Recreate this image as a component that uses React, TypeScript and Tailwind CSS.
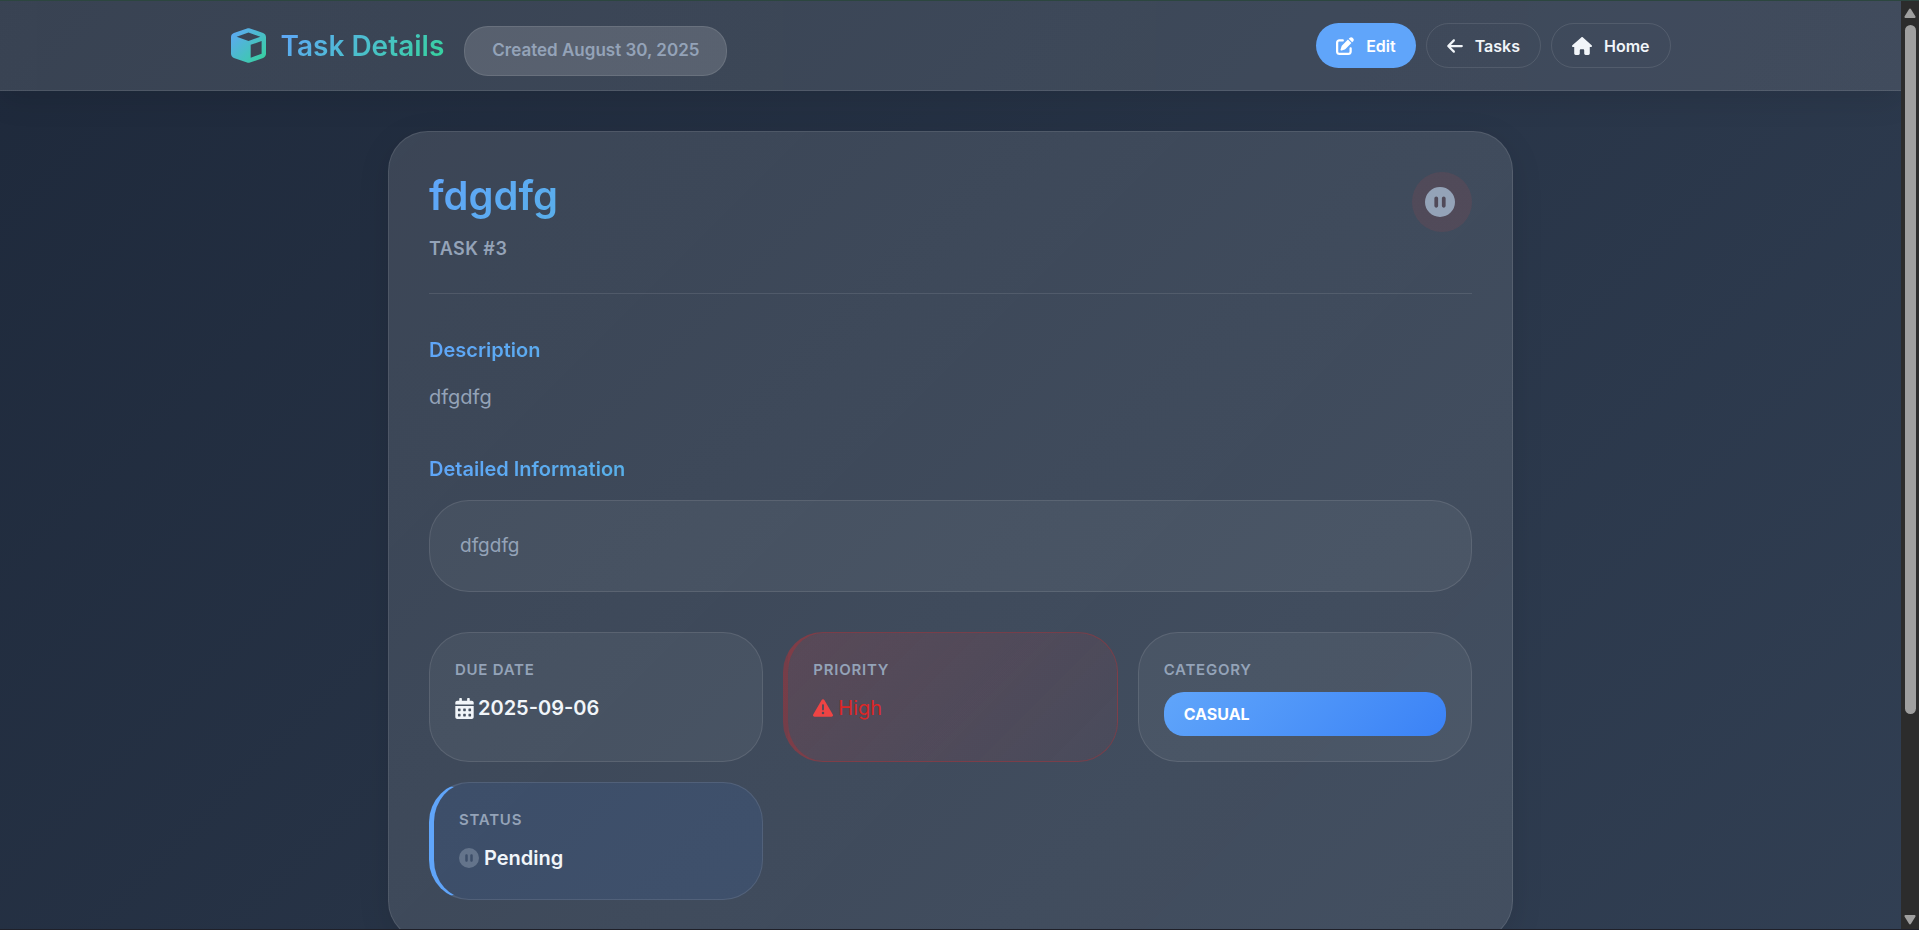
import type { ReactNode } from "react";
import { FaCalendarAlt } from "react-icons/fa";
import {
  FaArrowLeft,
  FaCirclePause,
  FaHouse,
  FaPenToSquare,
  FaTriangleExclamation,
} from "react-icons/fa6";

function CubeLogo() {
  return (
    <svg viewBox="0 0 512 512" className="size-[35px] shrink-0" aria-hidden="true">
      <defs>
        <linearGradient id="cube" x1="0" y1="0" x2="1" y2="1">
          <stop offset="0" stopColor="#60a5fa" />
          <stop offset="1" stopColor="#34d399" />
        </linearGradient>
      </defs>
      <path
        fill="url(#cube)"
        d="M234.5 5.7c13.9-5 29.1-5 43.1 0l192 68.6C495 83.4 512 107.5 512 134.6V377.4c0 27-17 51.2-42.5 60.3l-192 68.6c-13.9 5-29.1 5-43.1 0l-192-68.6C17 428.6 0 404.5 0 377.4V134.6c0-27 17-51.2 42.5-60.3l192-68.6zM256 66L82.3 128 256 190l173.7-62L256 66zm32 368.6l160-57.1v-188L288 246.6v188z"
      />
    </svg>
  );
}

function NavLink({ icon, label, primary }: { icon: ReactNode; label: string; primary?: boolean }) {
  const tone = primary ? "bg-[#60a5fa] text-white" : "border border-white/10 text-slate-100";
  return (
    <a
      href="#"
      className={`flex h-[45px] items-center gap-3 rounded-3xl px-5 text-base font-semibold ${tone}`}
    >
      {icon}
      {label}
    </a>
  );
}

function Header() {
  return (
    <header className="border-b border-white/10 bg-linear-to-r from-white/12 to-white/10 shadow-[0_8px_32px_rgba(0,0,0,0.1)]">
      <div className="mx-auto flex h-[89px] max-w-[1440px] items-center justify-between">
        <div className="flex items-center gap-5">
          <h1 className="flex items-center gap-[15px] text-[28px] leading-9 font-semibold">
            <CubeLogo />
            <span className="bg-linear-135 from-[#60a5fa] to-[#34d399] bg-clip-text text-transparent">
              Task Details
            </span>
          </h1>
          <p className="mt-[10px] flex h-[50px] items-center rounded-3xl border border-white/10 bg-white/15 px-[27px] text-[17px] font-semibold text-[#94a3b8]">
            Created August 30, 2025
          </p>
        </div>
        <nav className="flex items-center gap-[10px]">
          <NavLink primary icon={<FaPenToSquare className="size-[18px]" />} label="Edit" />
          <NavLink icon={<FaArrowLeft className="h-[18px] w-4" />} label="Tasks" />
          <NavLink icon={<FaHouse className="size-5" />} label="Home" />
        </nav>
      </div>
    </header>
  );
}

function SectionTitle({ children }: { children: ReactNode }) {
  return (
    <h3 className="bg-linear-135 from-[#60a5fa] to-[#34d399] bg-clip-text text-xl leading-8 font-semibold text-transparent">
      {children}
    </h3>
  );
}

function InfoCard({ label, className, children }: { label: string; className: string; children: ReactNode }) {
  return (
    <div className={`rounded-[40px] border p-[25px] ${className}`}>
      <h4 className="mb-[10px] text-[15px] leading-6 font-semibold tracking-wider text-[#94a3b8] uppercase">
        {label}
      </h4>
      {children}
    </div>
  );
}

function TaskCard() {
  return (
    <article className="mx-auto max-w-[1125px] rounded-[40px] border border-white/10 bg-linear-135 from-white/12 to-white/10 p-10 shadow-[0_8px_32px_rgba(0,0,0,0.1)]">
      <div className="flex items-start gap-5 border-b border-white/10 pb-[30px]">
        <div className="grow">
          <h2 className="bg-linear-135 from-[#60a5fa] to-[#34d399] bg-clip-text text-[40px] leading-[48px] font-semibold text-transparent">
            fdgdfg
          </h2>
          <p className="mt-[14px] text-[18px] leading-[29px] font-semibold tracking-wide text-[#94a3b8]">TASK #3</p>
        </div>
        <span className="flex size-[60px] items-center justify-center rounded-full bg-[#ef4444]/10">
          <FaCirclePause className="mr-[5px] text-[30px] text-[#94a3b8]" />
        </span>
      </div>

      <section className="mt-10">
        <SectionTitle>Description</SectionTitle>
        <p className="mt-[15px] text-xl leading-8 text-[#94a3b8]">dfgdfg</p>
      </section>

      <section className="mt-10">
        <SectionTitle>Detailed Information</SectionTitle>
        <div className="mt-[15px] rounded-[40px] border border-white/10 bg-white/5 p-[30px] text-[19px] leading-[30px] text-[#94a3b8]">
          dfgdfg
        </div>
      </section>

      <section className="mt-10 grid grid-cols-3 gap-5">
        <InfoCard label="Due date" className="border-white/10 bg-white/5">
          <p className="flex items-center gap-1 text-xl leading-8 font-semibold text-slate-100">
            <FaCalendarAlt className="h-[21px] w-[19px]" />
            2025-09-06
          </p>
        </InfoCard>
        <InfoCard
          label="Priority"
          className="border-l-5 border-[#dc2626]/30 bg-linear-135 from-[#ef4444]/15 to-[#ef4444]/5"
        >
          <p className="flex items-center gap-[5px] text-xl leading-8 text-[#dc2626]">
            <FaTriangleExclamation className="size-5 text-[#ef4444]" />
            High
          </p>
        </InfoCard>
        <InfoCard label="Category" className="border-white/10 bg-white/5">
          <p className="flex h-11 items-center rounded-[20px] bg-linear-135 from-[#60a5fa] to-[#3b82f6] px-5 text-base font-bold text-white">
            CASUAL
          </p>
        </InfoCard>
        <InfoCard label="Status" className="border-l-5 border-white/10 border-l-[#60a5fa] bg-[#3b82f6]/10">
          <p className="flex items-center gap-[5px] text-xl leading-8 font-semibold text-slate-100">
            <FaCirclePause className="size-5 text-[#64748b]" />
            Pending
          </p>
        </InfoCard>
      </section>
    </article>
  );
}

function ScrollRail() {
  return (
    <div className="flex w-[18px] shrink-0 flex-col items-center bg-[#2c2c2c] pt-[7px] pb-1" aria-hidden="true">
      <svg viewBox="0 0 12 10" className="h-[10px] w-3 fill-[#9f9f9f]">
        <path d="M6 0.5Q6.6 0.5 7 1.2L11.5 8.6Q11.8 9.8 10.8 10H1.2Q0.2 9.8 0.5 8.6L5 1.2Q5.4 0.5 6 0.5Z" />
      </svg>
      <div className="mt-[7px] mb-[7px] flex w-[11px] grow flex-col">
        <div className="h-[78%] rounded-full bg-[#9f9f9f]" />
      </div>
      <svg viewBox="0 0 12 10" className="h-[10px] w-3 fill-[#9f9f9f]">
        <path d="M6 9.5Q6.6 9.5 7 8.8L11.5 1.4Q11.8 0.2 10.8 0H1.2Q0.2 0.2 0.5 1.4L5 8.8Q5.4 9.5 6 9.5Z" />
      </svg>
    </div>
  );
}

export default function App() {
  return (
    <div className="flex h-screen overflow-hidden border-t border-b border-t-[#2c463f] border-b-[#1f2029] font-['Inter','Liberation_Sans',sans-serif]">
      <div className="grow overflow-hidden">
        <div className="bg-linear-135 from-[#1e293b] to-[#334155] pb-60">
          <Header />
          <main className="px-10 pt-10">
            <TaskCard />
          </main>
        </div>
      </div>
      <ScrollRail />
    </div>
  );
}
